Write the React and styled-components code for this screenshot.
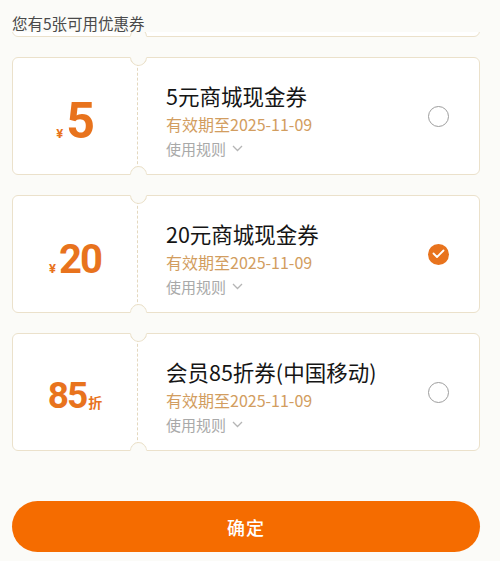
import React from "react";
import styled, { createGlobalStyle } from "styled-components";

const PAGE_BG = "#fbfbf8";
const LINE = "#ebe1cb";
const ORANGE = "#e8731d";

const Global = createGlobalStyle`
  html, body { margin: 0; padding: 0; background: ${PAGE_BG}; }
  body { font-family: "Noto Sans CJK SC", "Noto Sans", sans-serif; }
  * { box-sizing: border-box; }
`;

const Page = styled.div`
  width: 500px;
  height: 561px;
  overflow: hidden;
  display: flex;
  flex-direction: column;
  background: ${PAGE_BG};
`;

const Header = styled.div`
  height: 32px;
  padding: 12px 12px 0;
  font-size: 15.5px;
  line-height: 22px;
  color: #4a4a4a;
  background: ${PAGE_BG};
  position: relative;
  z-index: 2;
`;

const Viewport = styled.div`
  overflow: hidden;
  display: flex;
  flex-direction: column;
  gap: 20px;
  padding: 0 20px 0 12px;
`;

const Card = styled.div`
  position: relative;
  height: 118px;
  flex-shrink: 0;
  display: flex;
  background: #fff;
  border: 1px solid ${LINE};
  border-radius: 6px;
  margin-top: ${(p) => (p.$scrolledOff ? "-113px" : "0")};
`;

const Stub = styled.div`
  width: 124px;
  display: flex;
  align-items: baseline;
  justify-content: center;
  padding-top: ${(p) => p.$pt}px;
  color: ${ORANGE};
  font-family: "Roboto", "Liberation Sans", sans-serif;
`;

const Currency = styled.span`
  font-size: 13px;
  font-weight: 700;
  margin-right: 3px;
`;

const Amount = styled.span`
  font-size: ${(p) => p.$size}px;
  line-height: 1;
  font-weight: 700;
  letter-spacing: ${(p) => p.$ls}px;
`;

const Unit = styled.span`
  font-family: "Noto Sans CJK SC", sans-serif;
  font-size: 14px;
  font-weight: 700;
  margin-left: 2px;
`;

const Divider = styled.div`
  position: relative;
  width: 1px;
  border-left: 1px dashed #e4d8bf;
  &::before,
  &::after {
    content: "";
    position: absolute;
    left: -8px;
    width: 15px;
    height: 15px;
    border-radius: 50%;
    background: ${PAGE_BG};
    border: 1px solid ${LINE};
    border-top-color: transparent;
    border-right-color: transparent;
  }
  &::before {
    top: -9px;
    transform: rotate(-45deg);
  }
  &::after {
    bottom: -9px;
    transform: rotate(135deg);
  }
`;

const Body = styled.div`
  flex: 1;
  display: flex;
  align-items: center;
  padding: 0 30px 0 28px;
`;

const Info = styled.div`
  flex: 1;
  display: flex;
  flex-direction: column;
  gap: 2px;
  margin-top: 9px;
`;

const Title = styled.div`
  font-size: 21.5px;
  line-height: 28px;
  font-weight: 400;
  color: #151515;
`;

const Valid = styled.div`
  font-size: 16px;
  line-height: 24px;
  color: #d29d60;
`;

const Rules = styled.div`
  display: flex;
  align-items: center;
  gap: 6px;
  font-size: 15px;
  line-height: 22px;
  color: #a9a9a9;
`;

const Radio = styled.div`
  width: 21px;
  height: 21px;
  border-radius: 50%;
  border: ${(p) => (p.$checked ? "none" : "1.5px solid #9d9d9d")};
  background: ${(p) => (p.$checked ? ORANGE : "#fff")};
  display: flex;
  align-items: center;
  justify-content: center;
  flex-shrink: 0;
`;

const ConfirmButton = styled.button`
  margin: 50px 20px 0 12px;
  height: 51px;
  border: none;
  border-radius: 26px;
  background: #f56c00;
  color: #fff;
  font-family: "Noto Sans CJK SC", sans-serif;
  font-size: 18px;
  font-weight: 500;
  letter-spacing: 1px;
`;

const Chevron = () => (
  <svg width="11" height="7" viewBox="0 0 11 7" fill="none">
    <polyline points="1,1 5.5,5.5 10,1" stroke="#b5b5b5" strokeWidth="1.3" />
  </svg>
);

const Check = () => (
  <svg width="13" height="10" viewBox="0 0 13 10" fill="none">
    <polyline points="1.5,4.5 5,8 11.5,1.5" stroke="#fff" strokeWidth="1.8" strokeLinecap="round" strokeLinejoin="round" />
  </svg>
);

const coupons = [
  { id: 1, amount: "5", size: 50, ls: -1, currency: true, title: "5元商城现金券", checked: false, pt: 38 },
  { id: 2, amount: "20", size: 40, ls: -2, currency: true, title: "20元商城现金券", checked: true, pt: 44 },
  { id: 3, amount: "85", size: 37, ls: -2, unit: "折", title: "会员85折券(中国移动)", checked: false, pt: 43 },
];

function Coupon({ c }) {
  return (
    <Card>
      <Stub $pt={c.pt}>
        {c.currency && <Currency>¥</Currency>}
        <Amount $size={c.size} $ls={c.ls}>{c.amount}</Amount>
        {c.unit && <Unit>{c.unit}</Unit>}
      </Stub>
      <Divider />
      <Body>
        <Info>
          <Title>{c.title}</Title>
          <Valid>有效期至2025-11-09</Valid>
          <Rules>
            使用规则
            <Chevron />
          </Rules>
        </Info>
        <Radio $checked={c.checked}>{c.checked && <Check />}</Radio>
      </Body>
    </Card>
  );
}

function ScrolledCard() {
  return (
    <Card $scrolledOff>
      <Stub $pt={0} />
      <Divider />
      <Body />
    </Card>
  );
}

export default function App() {
  return (
    <>
      <Global />
      <Page>
        <Header>您有5张可用优惠券</Header>
        <Viewport>
          <ScrolledCard />
          {coupons.map((c) => (
            <Coupon key={c.id} c={c} />
          ))}
        </Viewport>
        <ConfirmButton>确定</ConfirmButton>
      </Page>
    </>
  );
}
